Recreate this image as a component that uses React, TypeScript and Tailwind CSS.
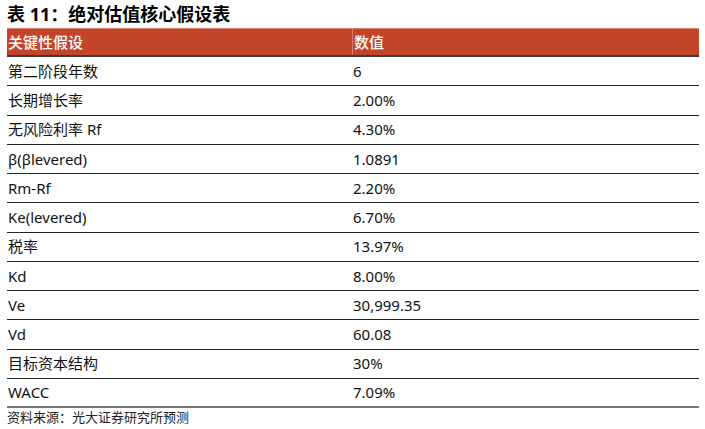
const rows: [string, string][] = [
  ["第二阶段年数", "6"],
  ["长期增长率", "2.00%"],
  ["无风险利率 Rf", "4.30%"],
  ["β(βlevered)", "1.0891"],
  ["Rm-Rf", "2.20%"],
  ["Ke(levered)", "6.70%"],
  ["税率", "13.97%"],
  ["Kd", "8.00%"],
  ["Ve", "30,999.35"],
  ["Vd", "60.08"],
  ["目标资本结构", "30%"],
  ["WACC", "7.09%"],
]

export default function App() {
  return (
    <div
      className="w-[705px] h-[429px] bg-white text-[#111] overflow-hidden"
      style={{ fontFamily: '"Noto Sans", "Noto Sans CJK SC", sans-serif' }}
    >
      <div className="pl-[7px] pr-[6px] pt-[3px]">
        <h1 className="text-[18px] font-bold leading-[22px] h-[25px] text-black">表 11：绝对估值核心假设表</h1>

        <div className="flex h-[29px] bg-[#c4442a] text-white text-[15px] font-medium items-center border-b-2 border-[#3b3b3b] border-t border-t-[#d9826e]">
          <div className="w-[345px] pl-[1px]">关键性假设</div>
          <div className="flex-1 pl-[1px] border-l border-[#d67a66] h-full flex items-center">数值</div>
        </div>

        {rows.map(([k, v], i) => (
          <div
            key={k}
            className={`flex h-[29.25px] items-center text-[15px] border-b ${
              i === rows.length - 1 ? "border-b-2 border-[#777]" : "border-[#222]"
            }`}
          >
            <div className="w-[345px] pl-[1px] whitespace-nowrap">{k}</div>
            <div className="flex-1 pl-[1px] whitespace-nowrap">{v}</div>
          </div>
        ))}

        <div className="text-[13px] leading-[16px] pt-[1px] text-[#222]">资料来源：光大证券研究所预测</div>
      </div>
    </div>
  )
}
